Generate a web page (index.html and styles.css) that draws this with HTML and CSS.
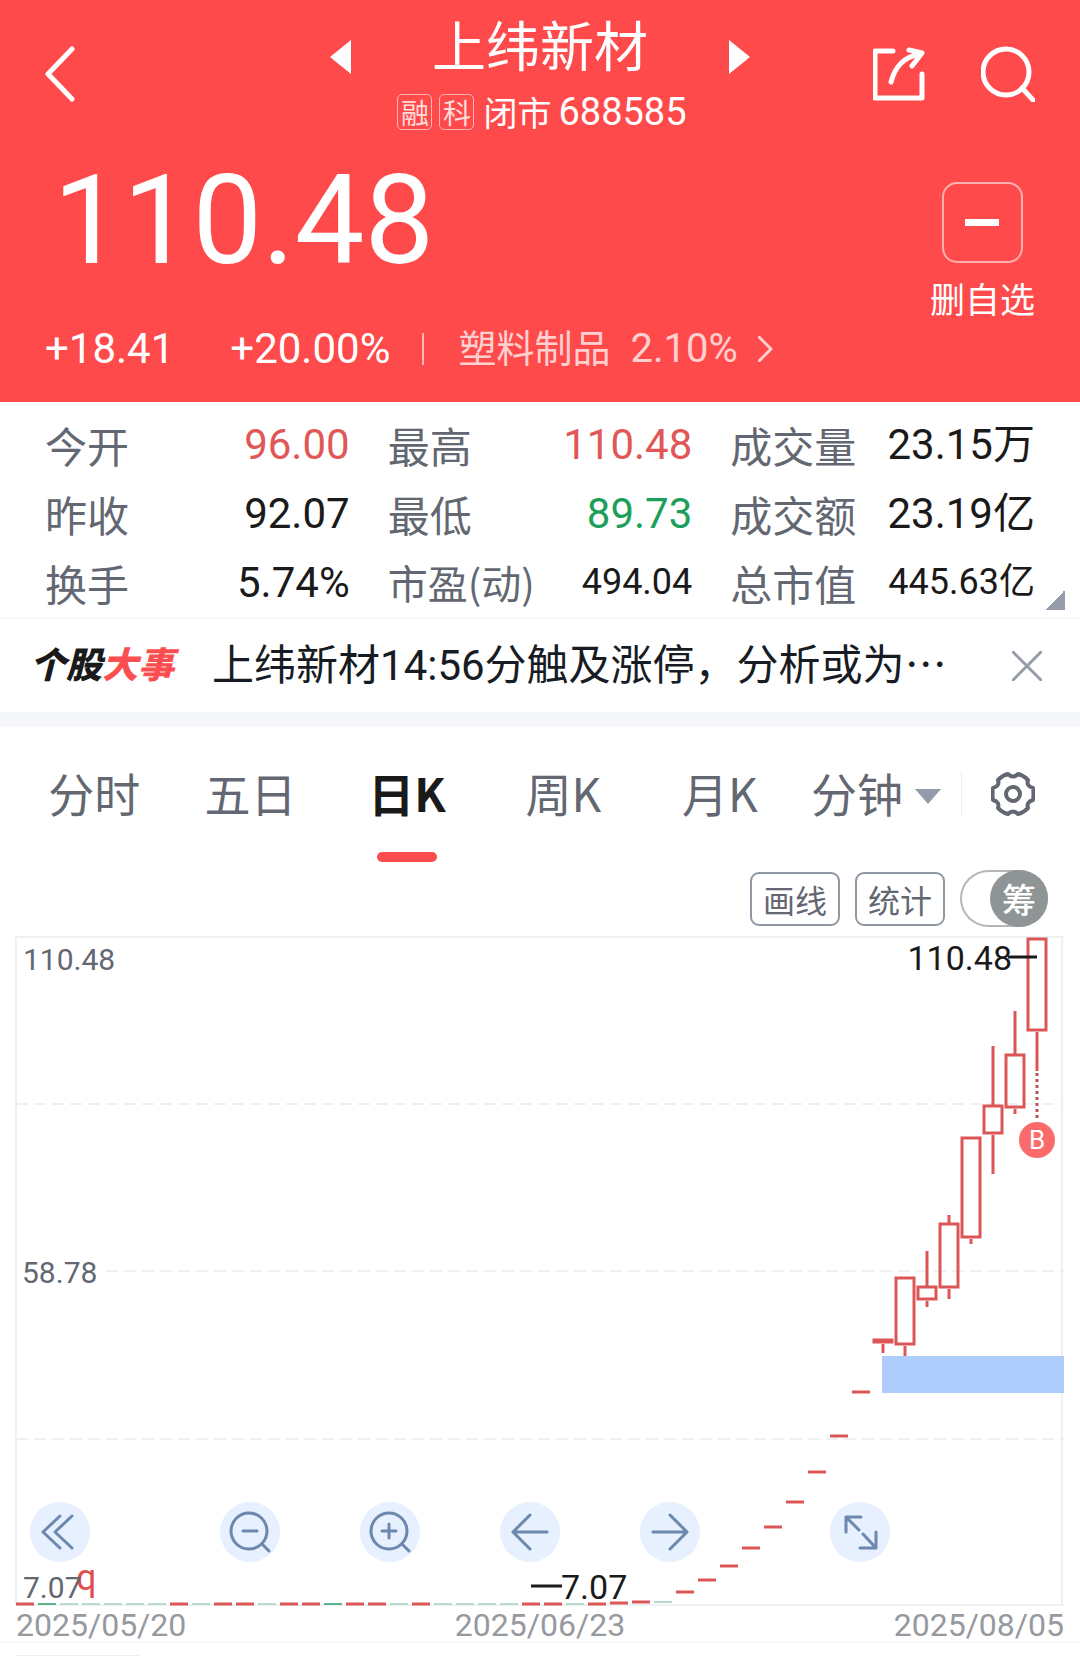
FILE: index.html
```html
<!DOCTYPE html>
<html lang="zh-CN">
<head>
  <meta charset="UTF-8">
  <meta name="viewport" content="width=device-width, initial-scale=1.0">
  <title>上纬新材 688585</title>
  <link rel="stylesheet" href="styles.css">
</head>
<body>
  <header class="header">
    <div class="topbar">
      <button type="button" class="icon-btn back-btn" aria-label="返回">
        <svg width="30" height="56" viewBox="0 0 30 56"><path d="M27 3 3 28l24 25" /></svg>
      </button>
      <div class="title-block">
        <div class="title-row">
          <button type="button" class="icon-btn" aria-label="上一只">
            <svg class="solid" width="21" height="34" viewBox="0 0 21 34"><path d="M21 0v34L0 17z" /></svg>
          </button>
          <h1>上纬新材</h1>
          <button type="button" class="icon-btn" aria-label="下一只">
            <svg class="solid" width="21" height="34" viewBox="0 0 21 34"><path d="M0 0v34l21-17z" /></svg>
          </button>
        </div>
        <div class="subtitle">
          <span class="tag">融</span>
          <span class="tag">科</span>
          <span class="status">闭市</span>
          <span class="code">688585</span>
        </div>
      </div>
      <div class="actions">
        <button type="button" class="icon-btn" aria-label="分享">
          <svg width="52" height="54" viewBox="0 0 52 54">
            <path d="M20 4H2v47h47V27M18 35C22 20 30 10 47 7M36 3l13 3-10 13" />
          </svg>
        </button>
        <button type="button" class="icon-btn" aria-label="搜索">
          <svg width="54" height="56" viewBox="0 0 54 56"><circle cx="25" cy="26" r="23" /><path d="m41 42 12 13" /></svg>
        </button>
      </div>
    </div>

    <div class="quote">
      <div class="price">110.48</div>
      <button type="button" class="favorite">
        <span class="favorite-box"></span>
        <span>删自选</span>
      </button>
    </div>

    <div class="change">
      <span class="change-value">+18.41</span>
      <span>+20.00%</span>
      <a href="#sector" class="sector">
        <span>塑料制品</span>
        <span class="sector-change">2.10%</span>
        <svg width="15" height="26" viewBox="0 0 15 26"><path d="m1 1 12 12L1 25" /></svg>
      </a>
    </div>
  </header>

  <dl class="stats">
    <div><dt>今开</dt><dd class="up">96.00</dd></div>
    <div><dt>最高</dt><dd class="up">110.48</dd></div>
    <div><dt>成交量</dt><dd>23.15万</dd></div>
    <div><dt>昨收</dt><dd>92.07</dd></div>
    <div><dt>最低</dt><dd class="down">89.73</dd></div>
    <div><dt>成交额</dt><dd>23.19亿</dd></div>
    <div><dt>换手</dt><dd>5.74%</dd></div>
    <div><dt class="narrow">市盈(动)</dt><dd class="small">494.04</dd></div>
    <div><dt>总市值</dt><dd class="small">445.63亿</dd></div>
  </dl>

  <div class="news">
    <strong class="news-logo">个股<span>大事</span></strong>
    <a href="#news" class="news-text">上纬新材14:56分触及涨停，分析或为<span class="more">…</span></a>
    <button type="button" class="icon-btn news-close" aria-label="关闭">
      <svg width="30" height="30" viewBox="0 0 30 30"><path d="m1 1 28 28M29 1 1 29" /></svg>
    </button>
  </div>

  <nav class="tabs">
    <button type="button" class="tab">分时</button>
    <button type="button" class="tab">五日</button>
    <button type="button" class="tab active">日K</button>
    <button type="button" class="tab">周K</button>
    <button type="button" class="tab">月K</button>
    <button type="button" class="tab tab-minute">分钟
      <svg width="26" height="15" viewBox="0 0 26 15"><path d="M0 0h26L13 15z" /></svg>
    </button>
    <button type="button" class="settings" aria-label="设置">
      <svg width="44" height="46" viewBox="-22 -23 44 46">
        <path d="M-5-20Q0-15 5-20Q10-19 15-14Q13-8 20-6Q21 0 20 6Q13 8 15 14Q10 19 5 20Q0 15-5 20Q-10 19-15 14Q-13 8-20 6Q-21 0-20-6Q-13-8-15-14Q-10-19-5-20z" />
        <circle r="7" />
      </svg>
    </button>
  </nav>

  <div class="tools">
    <button type="button" class="tool-btn">画线</button>
    <button type="button" class="tool-btn">统计</button>
    <label class="switch">
      <input type="checkbox" checked>
      <span>筹</span>
    </label>
  </div>

  <section class="chart">
    <svg class="kline" viewBox="0 0 1080 672" role="img" aria-label="日K线图">
      <g class="frame">
        <path d="M16 1H1064M16 669H1064M16 1V669M1062 1V669" />
        <path class="dash" d="M16 168H1064M106 335H1064M16 503H1064" />
      </g>
      <g id="candles"></g>
      <rect class="gap-zone" x="882" y="420" width="182" height="37" />
      <path class="buy-line" d="M1037 137V184" />
      <circle class="buy-mark" cx="1037" cy="204" r="18" />
      <text class="buy-text" x="1037" y="213">B</text>
      <path class="pointer" d="M1008 21h29M531 650h31" />
      <text class="extreme" x="1012" y="34" text-anchor="end">110.48</text>
      <text class="extreme" x="561" y="663">7.07</text>
      <text class="q-mark" x="76" y="654">q</text>
      <text class="axis" x="23" y="34">110.48</text>
      <text class="axis" x="22" y="347">58.78</text>
      <text class="axis" x="23" y="662">7.07</text>
    </svg>
    <div class="chart-controls">
      <button type="button" aria-label="最早">
        <svg viewBox="0 0 60 60"><path d="M30 14 13 30l17 16M42 14 25 30l17 16" /></svg>
      </button>
      <div class="control-group">
        <button type="button" aria-label="缩小">
          <svg viewBox="0 0 60 60"><circle cx="29" cy="29" r="18" /><path d="M23 29h14M42 42l7 7" /></svg>
        </button>
        <button type="button" aria-label="放大">
          <svg viewBox="0 0 60 60"><circle cx="29" cy="29" r="18" /><path d="M22 29h14M29 22v14M42 42l7 7" /></svg>
        </button>
        <button type="button" aria-label="左移">
          <svg viewBox="0 0 60 60"><path d="M30 13 13 30l17 17M13 30h34" /></svg>
        </button>
        <button type="button" aria-label="右移">
          <svg viewBox="0 0 60 60"><path d="m30 13 17 17-17 17M47 30H13" /></svg>
        </button>
      </div>
      <button type="button" aria-label="全屏">
        <svg viewBox="0 0 60 60"><path d="M31 15H16v15M16 15l13 13M33 32l13 14M46 30v16H30" /></svg>
      </button>
    </div>
  </section>

  <div class="dates">
    <span>2025/05/20</span>
    <span>2025/06/23</span>
    <span>2025/08/05</span>
  </div>
  <div class="indicator"></div>

  <script src="chart.js"></script>
</body>
</html>
```

FILE: styles.css
```css
* {
  margin: 0;
  padding: 0;
  box-sizing: border-box;
}

body {
  font-family: "Noto Sans CJK SC", sans-serif;
  background-color: #fff;
  color: #1a1a1a;
  line-height: 1;
}

button {
  font: inherit;
  color: inherit;
  background: none;
  border: none;
  cursor: pointer;
}

a {
  color: inherit;
  text-decoration: none;
}

svg {
  display: block;
  fill: none;
  stroke: currentColor;
  stroke-linecap: round;
  stroke-linejoin: round;
}

/* Figures use Roboto */
.code,
.price,
.change,
.stats dd,
.news,
.kline,
.dates {
  font-family: Roboto, "Noto Sans CJK SC", sans-serif;
}

/* Header */
.header {
  background-color: #ff4a4b;
  color: #fff;
  padding: 14px 45px 28px;
}

.topbar {
  display: grid;
  grid-template-columns: 1fr 420px 1fr;
  align-items: center;
}

.icon-btn svg {
  stroke-width: 5;
}

.icon-btn .solid {
  fill: currentColor;
  stroke: none;
}

.back-btn {
  justify-self: start;
}

.title-row {
  display: flex;
  justify-content: space-between;
  align-items: flex-end;
}

.title-row h1 {
  font-size: 54px;
  font-weight: 400;
  line-height: 60px;
}

.subtitle {
  display: flex;
  justify-content: center;
  align-items: center;
  gap: 7px;
  margin-top: 16px;
  padding-left: 4px;
  font-size: 38px;
  line-height: 44px;
}

.tag {
  width: 35px;
  border: 1px solid #ffb3b3;
  border-radius: 5px;
  color: #ffdcdc;
  font-size: 28px;
  line-height: 34px;
  text-align: center;
}

.status {
  margin-left: 2px;
  font-size: 34px;
}

.actions {
  display: flex;
  justify-content: flex-end;
  align-items: center;
  gap: 56px;
}

.quote {
  display: flex;
  justify-content: space-between;
  padding: 14px 0 0 8px;
}

.price {
  font-size: 124px;
  line-height: 146px;
}

.favorite {
  display: flex;
  flex-direction: column;
  align-items: center;
  gap: 15px;
  margin-top: 34px;
  font-size: 35px;
  line-height: 40px;
}

.favorite-box {
  display: grid;
  place-items: center;
  width: 81px;
  height: 81px;
  border: 2px solid #ffb0b0;
  border-radius: 15px;
}

.favorite-box::before {
  content: "";
  width: 34px;
  height: 7px;
  background-color: #fff;
}

.change {
  display: flex;
  align-items: center;
  gap: 32px;
  margin-top: 6px;
  font-size: 42px;
  line-height: 50px;
}

.change-value {
  margin-right: 24px;
}

.sector {
  display: flex;
  align-items: center;
  gap: 20px;
  color: #ffd0d0;
  font-size: 38px;
}

.sector::before {
  content: "";
  width: 2px;
  height: 32px;
  margin-right: 14px;
  background-color: #ffb8b8;
}

.sector-change {
  font-size: 40px;
}

.sector svg {
  stroke-width: 3;
}

/* Quote figures */
.stats {
  display: grid;
  grid-template-columns: repeat(3, 1fr);
  column-gap: 38px;
  padding: 8px 45px 0;
  border-bottom: 2px solid #f4f6f8;
  background: linear-gradient(135deg, transparent 50%, #959dab 50%) right 15px bottom 7px / 20px 20px no-repeat;
}

.stats div {
  display: flex;
  justify-content: space-between;
  font-size: 42px;
  line-height: 69px;
}

.stats dt {
  color: #626772;
}

.stats .narrow {
  font-size: 40px;
}

.stats .small {
  font-size: 36px;
}

.up {
  color: #e15757;
}

.down {
  color: #1d9f5b;
}

/* News line */
.news {
  display: flex;
  align-items: center;
  padding: 1px 38px 0 30px;
  border-bottom: 15px solid #f5f7fa;
  line-height: 92px;
}

.news-logo {
  font-size: 36px;
  font-weight: 900;
  font-style: italic;
  white-space: nowrap;
}

.news-logo span {
  color: #fb4e50;
}

.news-text {
  flex: 1;
  min-width: 0;
  margin-left: 38px;
  overflow: hidden;
  color: #171c24;
  font-size: 42px;
  white-space: nowrap;
}

.more {
  font-family: "Noto Sans CJK SC", sans-serif;
  line-height: 1;
}

.news-close {
  color: #959ca8;
}

.news-close svg {
  stroke-width: 3;
}

/* Period tabs */
.tabs {
  display: flex;
  align-items: flex-start;
  padding: 33px 45px 0 16px;
  color: #626772;
  font-size: 46px;
  line-height: 64px;
}

.tab {
  flex: 1;
  white-space: nowrap;
}

.tab.active {
  color: #1a1a1a;
  font-weight: 700;
}

.tab::after {
  content: "";
  display: block;
  width: 60px;
  height: 10px;
  margin: 28px auto 0;
  border-radius: 5px;
}

.tab.active::after {
  background-color: #fb4d4f;
}

.tab-minute {
  display: flex;
  align-items: center;
  flex: none;
  gap: 12px;
  margin-left: 13px;
}

.tab-minute::after {
  display: none;
}

.tab-minute svg {
  margin-top: 8px;
  fill: #929baa;
  stroke: none;
}

.settings {
  display: flex;
  align-items: center;
  height: 68px;
  margin-left: 20px;
}

.settings::before {
  content: "";
  width: 1px;
  height: 46px;
  margin-right: 29px;
  background-color: #edf0f3;
}

.settings svg {
  stroke-width: 4;
}

.tools {
  display: flex;
  justify-content: flex-end;
  align-items: center;
  gap: 15px;
  padding: 8px 32px 9px;
  color: #626772;
}

.tool-btn {
  width: 90px;
  border: 2px solid #8f97a3;
  border-radius: 9px;
  font-size: 32px;
  line-height: 50px;
}

.switch {
  position: relative;
  display: flex;
  justify-content: flex-end;
  width: 88px;
  border-radius: 29px;
  box-shadow: inset 0 0 0 2px #b4b6b8;
  cursor: pointer;
}

.switch input {
  position: absolute;
  inset: 0;
  opacity: 0;
}

.switch span {
  width: 58px;
  border-radius: 50%;
  background-color: #8f9496;
  color: #fff;
  font-size: 34px;
  font-weight: 500;
  line-height: 57px;
  text-align: center;
}

/* Chart */
.chart {
  position: relative;
}

.kline {
  width: 100%;
  stroke-linecap: butt;
  stroke-linejoin: miter;
}

.kline text {
  stroke: none;
}

.frame {
  stroke: #eef1f4;
  stroke-width: 2;
}

.frame .dash {
  stroke-dasharray: 12 6;
}

.candle-up {
  stroke: #dc5656;
  stroke-width: 3;
}

.candle-down {
  stroke: #5cb48a;
  stroke-width: 2;
}

.candle-flat {
  stroke: #b9d9ca;
  stroke-width: 2;
}

.gap-zone {
  fill: #aecdfc;
  stroke: none;
}

.buy-line {
  stroke: #b65656;
  stroke-width: 3;
  stroke-dasharray: 3 3;
}

.buy-mark {
  fill: #fb6b6c;
  stroke: none;
}

.buy-text {
  fill: #fff;
  font-size: 26px;
  text-anchor: middle;
}

.pointer {
  stroke: #1a1a1a;
  stroke-width: 3;
}

.extreme {
  fill: #1a1a1a;
  font-size: 34px;
}

.axis {
  fill: #626772;
  font-size: 30px;
}

.q-mark {
  fill: #e04e4e;
  font-size: 36px;
}

.chart-controls {
  position: absolute;
  left: 30px;
  bottom: 46px;
  display: flex;
  gap: 130px;
}

.control-group {
  display: flex;
  gap: 80px;
}

.chart-controls button {
  width: 60px;
  height: 60px;
  border-radius: 50%;
  background-color: #e6f0fe;
  color: #6c88ae;
}

.chart-controls svg {
  stroke-width: 3;
}

.dates {
  display: flex;
  justify-content: space-between;
  padding: 0 16px;
  border-bottom: 1px solid #f3f4f6;
  color: #96999e;
  font-size: 32px;
  line-height: 34px;
}

.indicator {
  width: 124px;
  height: 13px;
  margin-left: 16px;
  border-bottom: 1px solid #eef0f2;
}
```

FILE: chart.js
```js
// Each candle: [x, high, bodyTop, bodyBottom, low]
const candles = [
  [883, 403, 403, 408, 417],
  [905, 341, 341, 410, 420],
  [927, 315, 350, 365, 371],
  [949, 279, 287, 353, 363],
  [971, 201, 201, 303, 308],
  [993, 110, 169, 199, 238],
  [1015, 75, 118, 173, 178],
  [1037, 2, 2, 96, 135]
];

// Days where the price did not move: [x, y, type]
const flats = [
  [685, 656, "up"], [707, 644, "up"], [729, 630, "up"], [751, 612, "up"],
  [773, 591, "up"], [795, 566, "up"], [817, 536, "up"], [839, 500, "up"],
  [861, 456, "up"], [663, 666, "flat"], [641, 666, "up"], [619, 667, "up"]
];

// First 27 days on the base line, u = up, d = down, f = flat
"udfffffufuufuuduufuffffuufu".split("").forEach((c, i) => {
  const type = { u: "up", d: "down", f: "flat" }[c];
  flats.push([25 + i * 22, 668, type]);
});

function drawCandles() {
  let html = "";
  flats.forEach(([x, y, type]) => {
    html += `<path class="candle-${type}" d="M${x - 9} ${y}h18" />`;
  });
  candles.forEach(([x, high, top, bottom, low]) => {
    html += `<path class="candle-up" d="M${x} ${high}V${top}M${x} ${bottom}V${low}" />`;
    html += `<rect class="candle-up" x="${x - 9}" y="${top + 1}" width="18" height="${bottom - top - 3}" />`;
  });
  document.getElementById("candles").innerHTML = html;
}

drawCandles();
```
